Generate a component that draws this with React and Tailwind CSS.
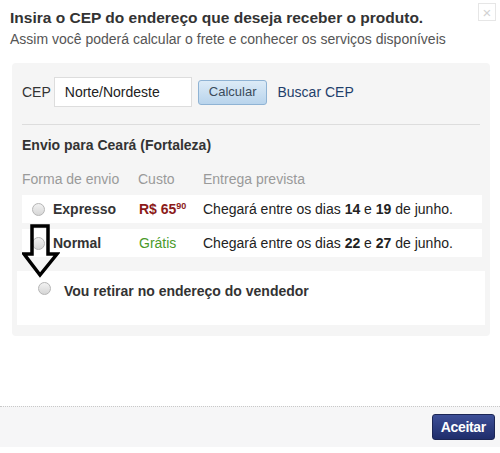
import React from 'react';

const Radio = () => (
  <span className="inline-block w-[13px] h-[13px] rounded-full border border-[#b5b5b5] bg-gradient-to-b from-[#f2f2f2] to-[#d6d6d6]" />
);

// seta de destaque desenhada por cima da lista
const DownArrow = () => (
  <svg width="38" height="54" viewBox="0 0 38 54" className="absolute left-[22px] top-[224px]">
    <path
      d="M10 2 H26 V30 H35 L18 51 L2 30 H10 Z"
      fill="none"
      stroke="#000"
      strokeWidth="3.5"
      strokeLinejoin="miter"
    />
  </svg>
);

const App = () => {
  return (
    <div className="relative w-[500px] h-[453px] bg-white font-['Liberation_Sans',Arial,sans-serif] text-[#333] overflow-hidden">
      {/* Fechar */}
      <div className="absolute right-[4px] top-[3px] w-[18px] h-[18px] border border-[#e6e6e6] flex items-center justify-center text-[#d2d2d2] text-[15px] leading-none">
        ×
      </div>

      {/* Cabeçalho */}
      <div className="px-[10px] pt-[8px]">
        <h2 className="text-[15.5px] font-bold text-[#333] leading-[20px]">
          Insira o CEP do endereço que deseja receber o produto.
        </h2>
        <p className="text-[14px] text-[#555] leading-[18px] mt-[2px]">
          Assim você poderá calcular o frete e conhecer os serviços disponíveis
        </p>
      </div>

      {/* Painel */}
      <div className="mx-[12px] mt-[15px] w-[478px] h-[273px] bg-[#f5f5f5] rounded-[4px] px-[10px] pt-[14px]">
        <div className="flex items-center h-[30px]">
          <span className="text-[14px] text-[#333]">CEP</span>
          <div className="ml-[3px] w-[138px] h-[30px] bg-white border border-[#ddd] flex items-center px-[10px] text-[14px] text-[#222]">
            Norte/Nordeste
          </div>
          <button className="ml-[6px] h-[25px] px-[10px] rounded-[3px] border border-[#8fb3d4] bg-gradient-to-b from-[#dcebf7] to-[#b9d4ec] text-[13px] text-[#3b4b5b]">
            Calcular
          </button>
          <span className="ml-[10px] text-[14px] text-[#1f3f6b]">Buscar CEP</span>
        </div>

        <div className="mt-[17px] h-px bg-[#ddd] w-[458px]" />

        <div className="mt-[11px] text-[14px] font-bold text-[#333] leading-[18px]">
          Envio para Ceará (Fortaleza)
        </div>

        <div className="mt-[16px] flex text-[14px] text-[#9a9a9a] leading-[18px]">
          <span className="w-[116px]">Forma de envio</span>
          <span className="w-[65px]">Custo</span>
          <span>Entrega prevista</span>
        </div>

        <div className="mt-[7px] w-[460px] h-[28px] bg-white flex items-center text-[14px]">
          <span className="w-[31px] flex justify-center pl-[2px]"><Radio /></span>
          <span className="w-[86px] font-bold text-[#333]">Expresso</span>
          <span className="w-[64px] font-bold text-[#8b1a1a]">
            R$ 65<sup className="text-[9px]">90</sup>
          </span>
          <span className="text-[#222]">
            Chegará entre os dias <b>14</b> e <b>19</b> de junho.
          </span>
        </div>

        <div className="mt-[6px] w-[460px] h-[28px] bg-white flex items-center text-[14px]">
          <span className="w-[31px] flex justify-center pl-[2px]"><Radio /></span>
          <span className="w-[86px] font-bold text-[#333]">Normal</span>
          <span className="w-[64px] text-[#4a9a2a]">Grátis</span>
          <span className="text-[#222]">
            Chegará entre os dias <b>22</b> e <b>27</b> de junho.
          </span>
        </div>

        <div className="mt-[14px] -ml-[5px] w-[468px] h-[54px] bg-white flex items-start pt-[10px] text-[14px]">
          <span className="w-[47px] flex justify-start pl-[21px] pt-[1px]"><Radio /></span>
          <span className="font-bold text-[#333]">Vou retirar no endereço do vendedor</span>
        </div>
      </div>

      <DownArrow />

      {/* Rodapé */}
      <div className="absolute left-0 right-0 top-[406px] h-[41px] bg-[#f6f6f7] border-t border-dotted border-[#c8c8c8] flex items-center justify-end pr-[5px]">
        <button className="h-[26px] px-[8px] rounded-[3px] border border-[#1c2655] bg-gradient-to-b from-[#3d4f98] to-[#1f2d6b] text-white text-[14px] font-bold tracking-[-0.3px]">
          Aceitar
        </button>
      </div>
    </div>
  );
};

export default App;
